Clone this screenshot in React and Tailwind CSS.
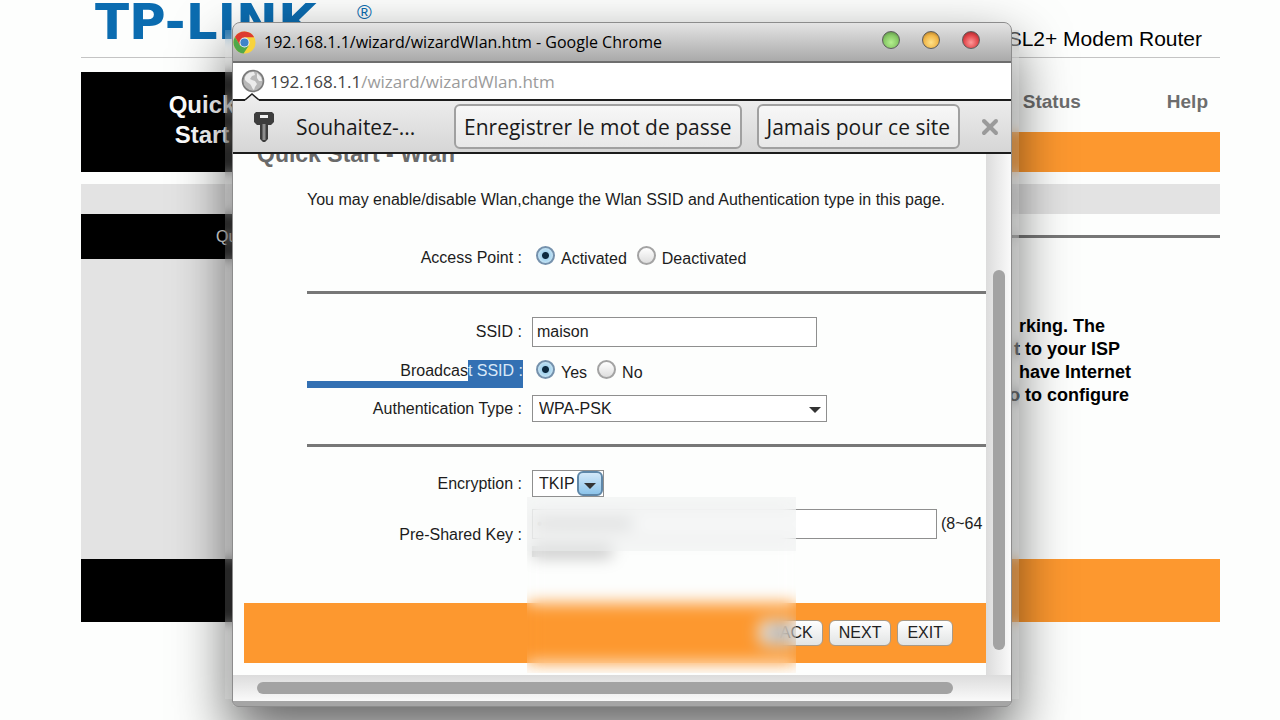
import { useState } from "react";
import { X } from "lucide-react";

const noticeLines = [
  "  rking. The",
  " t to your ISP",
  "  have Internet",
  "o to configure",
];

const lights = [
  { name: "Minimize", color: "bg-[radial-gradient(circle_at_50%_65%,#b5f08f_0%,#86c765_55%,#4b7a3a_100%)]" },
  { name: "Maximize", color: "bg-[radial-gradient(circle_at_50%_65%,#ffe38a_0%,#f0b548_55%,#96661c_100%)]" },
  { name: "Close", color: "bg-[radial-gradient(circle_at_50%_65%,#ff9a9a_0%,#e04448_55%,#8a1c20_100%)]" },
];

function ChromeLogo() {
  return (
    <svg viewBox="0 0 48 48" className="size-[23px] shrink-0" aria-hidden="true">
      <circle cx="24" cy="24" r="23" fill="#f7d33c" />
      <path d="M24 13 H44.2 A23 23 0 0 0 4.1 12.5 L14 29 Z" fill="#dd3b2f" />
      <path d="M4.1 12.5 A23 23 0 0 0 22 46.9 L33.5 29.5 L24 34 L14.5 29.5 Z" fill="#4fa84a" />
      <circle cx="24" cy="24" r="10.5" fill="#f4f4f4" />
      <circle cx="24" cy="24" r="8.5" fill="#3f84c8" />
    </svg>
  );
}

function GlobeIcon() {
  return (
    <svg viewBox="0 0 24 24" className="size-6 shrink-0" aria-hidden="true">
      <circle cx="12" cy="12" r="10.5" fill="#b8b8b8" stroke="#7b7b7b" strokeWidth="1.6" />
      <path d="M4 8 C6 4 9 3 13 3 L14 6 L11 7 L9 10 L11 11 L14 12 L16 15 L14 18 L13 21 C11 20 11 17 9 15 L6 13 L4 11 Z" fill="#ececec" />
      <path d="M16 4 L20 8 L21 12 L18 12 L16 9 Z" fill="#ececec" />
    </svg>
  );
}

function KeyIcon() {
  return (
    <svg viewBox="0 0 20 30" className="h-[30px] w-5 shrink-0" aria-hidden="true">
      <path d="M2 0 H18 L20 2 V10 L17 13 H14 V27 L11 30 H9 L6 27 V13 H3 L0 10 V2 Z" fill="#3d3d3d" />
      <rect x="6" y="3" width="8" height="3" fill="#f0f0f0" />
      <path d="M10 12 V28" stroke="#8d8d8d" strokeWidth="3" />
    </svg>
  );
}

function Radio({ label, ...props }) {
  return (
    <label className="flex items-start">
      <input
        type="radio"
        className="size-[19px] appearance-none rounded-full border-2 border-[#a3a3a3] bg-linear-to-b from-white to-[#dedede] checked:border-[#7591ac] checked:bg-[radial-gradient(circle,#0c2a40_0_3px,#a5d3ee_4px,#c8e6f6_8px)]"
        {...props}
      />
      <span className="ml-[6px] mt-[3px] leading-5">{label}</span>
    </label>
  );
}

function Row({ label, htmlFor, children, className = "" }) {
  return (
    <div className={`flex items-center ${className}`}>
      <label htmlFor={htmlFor} className="w-[215px] shrink-0 text-right">
        {label}
      </label>
      <div className="ml-[10px] flex items-center whitespace-nowrap">{children}</div>
    </div>
  );
}

function RouterPage() {
  return (
    <div className="ml-[81px] mr-[60px]">
      <header className="flex h-[58px] items-start justify-between border-b border-[#c4c4c4]">
        <div className="flex items-start pl-[14px] text-[#0b6cb0]">
          <span className="w-[262px] font-['DejaVu_Sans'] text-[50px] leading-[44px] font-bold">TP-LINK</span>
          <span className="text-xl leading-6">®</span>
        </div>
        <p className="pt-6 pr-[18px] text-[21px] leading-[30px] text-black">ADSL2+ Modem Router</p>
      </header>

      <div className="mt-[14px] flex h-[100px]">
        <a href="#quick" className="flex w-[242px] flex-col items-center justify-center bg-black pb-1 text-2xl leading-[30px] font-bold text-white">
          <span>Quick</span>
          <span>Start</span>
        </a>
        <div className="flex flex-1 flex-col">
          <nav className="flex h-[60px] items-center justify-end gap-[86px] pr-3 text-[19px] font-bold text-[#6d6d6d]">
            <a href="#status">Status</a>
            <a href="#help">Help</a>
          </nav>
          <div className="flex-1 bg-[#fd982f]" />
        </div>
      </div>

      <div className="mt-3 h-[30px] bg-[#e3e3e3]" />

      <main className="flex h-[345px]">
        <aside className="w-[242px] bg-[#e3e3e3]">
          <p className="h-[45px] bg-black pl-[135px] text-base leading-[45px] text-[#e6e6e6]">Quick Start</p>
        </aside>
        <div className="flex-1 pt-[21px]">
          <div className="h-[3px] bg-[#777777]" />
          <p className="mt-[77px] ml-auto w-[211px] text-lg leading-[23px] font-bold whitespace-pre text-black">
            {noticeLines.join("\n")}
          </p>
        </div>
      </main>

      <footer className="flex h-[63px]">
        <div className="w-[242px] bg-black" />
        <div className="flex-1 bg-[#fd982f]" />
      </footer>
    </div>
  );
}

function WizardForm() {
  const [active, setActive] = useState(true);
  const [broadcast, setBroadcast] = useState(true);

  return (
    <div className="relative min-w-0 flex-1 overflow-hidden bg-[#fdfefd] pb-3 pl-[11px]">
      <h1 className="-mt-[14px] ml-[13px] text-[23px] leading-7 font-bold text-[#6a6a6a]">Quick Start - Wlan</h1>

      <form className="ml-[63px] text-base leading-5 text-[#1c1c1c]" onSubmit={(e) => e.preventDefault()}>
        <p className="mt-[22px] whitespace-nowrap">
          You may enable/disable Wlan,change the Wlan SSID and Authentication type in this page.
        </p>

        <Row label="Access Point :" className="mt-9">
          <div className="ml-1 flex gap-[10px]">
            <Radio label="Activated" name="ap" checked={active} onChange={() => setActive(true)} />
            <Radio label="Deactivated" name="ap" checked={!active} onChange={() => setActive(false)} />
          </div>
        </Row>

        <hr className="mt-[22px] h-[3px] border-0 bg-[#777777]" />

        <Row label="SSID :" htmlFor="ssid" className="mt-[23px]">
          <input id="ssid" defaultValue="maison" className="h-[30px] w-[285px] border border-[#8f8f8f] bg-white px-1" />
        </Row>

        <div className="mt-[13px] flex items-start">
          <div className="flex w-[216px] shrink-0 flex-col">
            <p className="text-right leading-[21px]">
              Broadcas<span className="inline-block bg-[#3370b3] text-[#d9e8f8]">t SSID :</span>
            </p>
            <div className="h-[7px] bg-[#3370b3]" />
          </div>
          <div className="ml-[13px] flex gap-[10px]">
            <Radio label="Yes" name="broadcast" checked={broadcast} onChange={() => setBroadcast(true)} />
            <Radio label="No" name="broadcast" checked={!broadcast} onChange={() => setBroadcast(false)} />
          </div>
        </div>

        <Row label="Authentication Type :" htmlFor="auth" className="mt-[7px]">
          <div className="relative">
            <select id="auth" className="block h-[27px] w-[295px] appearance-none border border-[#8f8f8f] bg-white px-[6px]">
              <option>WPA-PSK</option>
            </select>
            <svg viewBox="0 0 12 6" className="pointer-events-none absolute top-3 right-[6px] h-[6px] w-3">
              <path d="M0 0 H12 L6 6 Z" fill="#333333" />
            </svg>
          </div>
        </Row>

        <hr className="mt-[22px] h-[3px] border-0 bg-[#777777]" />

        <Row label="Encryption :" htmlFor="enc" className="mt-[23px]">
          <div className="relative">
            <select id="enc" className="block h-[27px] w-[72px] appearance-none border border-[#8f8f8f] bg-white pl-[6px]">
              <option>TKIP</option>
            </select>
            <div className="pointer-events-none absolute top-px right-px flex h-[25px] w-[26px] items-end justify-center rounded-md border-2 border-[#5f87a8] bg-linear-to-b from-[#d3e8f8] to-[#8cc4ea] pb-[5px]">
              <svg viewBox="0 0 12 6" className="h-[6px] w-3">
                <path d="M0 0 H12 L6 6 Z" fill="#333333" />
              </svg>
            </div>
          </div>
        </Row>

        <Row label="Pre-Shared Key :" htmlFor="psk" className="mt-3">
          <div className="flex flex-col">
            <div className="flex items-center gap-1">
              <input id="psk" type="password" defaultValue="00000000000000000" className="h-[30px] w-[405px] border border-[#8f8f8f] bg-white px-1 text-[#333333]" />
              <span>(8~64</span>
            </div>
            <div className="mt-[7px] mb-[3px] h-[11px] w-20 bg-[#bbbbbb]" />
          </div>
        </Row>
      </form>

      <div className="mt-[43px] flex h-[60px] items-center justify-end gap-[6px] bg-[#fd982f] pr-[33px] text-base text-[#222222]">
        {["BACK", "NEXT", "EXIT"].map((name) => (
          <button
            key={name}
            className="h-[26px] rounded-md border border-[#a89a88] bg-linear-to-b from-white to-[#e2e4e4] px-[9px] leading-6"
          >
            {name}
          </button>
        ))}
      </div>

      {/* privacy blur */}
      <div className="absolute top-[343px] left-[294px] h-[176px] w-[269px] backdrop-blur-[8px]">
        <div className="h-[54px] bg-[#eef0ef]/50" />
      </div>
    </div>
  );
}

function PopupWindow() {
  return (
    <div className="absolute top-[22px] right-[268px] left-[232px] rounded-t-lg rounded-b-md shadow-[0_26px_56px_2px_rgba(0,0,0,0.6)]">
      <div className="absolute inset-y-2 -left-[7px] w-[7px] bg-white/15 backdrop-blur-[6px]" />
      <div className="absolute inset-y-2 -right-[7px] w-[7px] bg-white/15 backdrop-blur-[6px]" />

      <div className="relative overflow-hidden rounded-t-lg rounded-b-md border border-[#8c8c8c] bg-[#a5a5a5] font-['Open_Sans']">
        <div className="flex h-10 items-center border-b-2 border-[#6e6e6e] bg-linear-to-b from-[#e4e4e4] to-[#aaaaaa] pr-[31px]">
          <ChromeLogo />
          <h2 className="ml-2 flex-1 text-base font-medium whitespace-nowrap text-black">
            192.168.1.1/wizard/wizardWlan.htm - Google Chrome
          </h2>
          <div className="flex gap-[22px]">
            {lights.map((light) => (
              <button
                key={light.name}
                aria-label={light.name}
                className={`-mt-1 size-[18px] rounded-full border border-[#5c5c5c] ${light.color}`}
              />
            ))}
          </div>
        </div>

        <div className="relative flex h-9 items-center bg-white pl-2">
          <GlobeIcon />
          <p className="ml-[5px] pt-[2px] text-[17px] whitespace-nowrap text-[#9b9b9b]">
            <span className="text-[#444444]">192.168.1.1</span>/wizard/wizardWlan.htm
          </p>
          <svg viewBox="0 0 14 8" className="absolute -bottom-[2px] left-3 z-10 h-2 w-[14px]">
            <path d="M0 7 L7 1 L14 7 V8 H0 Z" fill="#ececec" />
            <path d="M0 7 L7 1 L14 7" fill="none" stroke="#222222" strokeWidth="1.5" />
          </svg>
        </div>

        <div className="flex h-[55px] items-center border-y-2 border-[#1c1c1c] bg-linear-to-b from-[#ececec] to-[#d6d6d6] pl-[21px] text-[21px] text-[#1a1a1a]">
          <KeyIcon />
          <p className="ml-[22px] flex-1 pt-[2px] whitespace-nowrap">Souhaitez-...</p>
          <button className="h-[45px] rounded-md border-2 border-[#a0a0a0] bg-linear-to-b from-[#f7f7f7] to-[#e8e8e8] px-2 pt-[2px] whitespace-nowrap">
            Enregistrer le mot de passe
          </button>
          <button className="ml-[15px] h-[45px] rounded-md border-2 border-[#a0a0a0] bg-linear-to-b from-[#f7f7f7] to-[#e8e8e8] px-2 pt-[2px] whitespace-nowrap">
            Jamais pour ce site
          </button>
          <button aria-label="Fermer" className="mr-[9px] ml-[18px] text-[#9a9a9a]">
            <X size={24} strokeWidth={4} />
          </button>
        </div>

        <div className="flex font-['Liberation_Sans']">
          <WizardForm />
          <div className="flex w-[25px] flex-col items-center bg-linear-to-r from-[#dcdcdc] to-[#fafafa] pt-[116px] pb-[25px]">
            <div className="w-3 flex-1 rounded-full bg-[#a3a3a3]" />
          </div>
        </div>
        <div className="mb-[5px] flex h-[26px] items-center bg-linear-to-b from-[#dcdcdc] to-[#fafafa] pr-[58px] pl-6">
          <div className="h-3 flex-1 rounded-full bg-[#a3a3a3]" />
        </div>
      </div>
    </div>
  );
}

export default function App() {
  return (
    <div className="relative h-screen overflow-hidden bg-[#fdfefd] font-['Liberation_Sans',Arial,sans-serif]">
      <RouterPage />
      <PopupWindow />
    </div>
  );
}
